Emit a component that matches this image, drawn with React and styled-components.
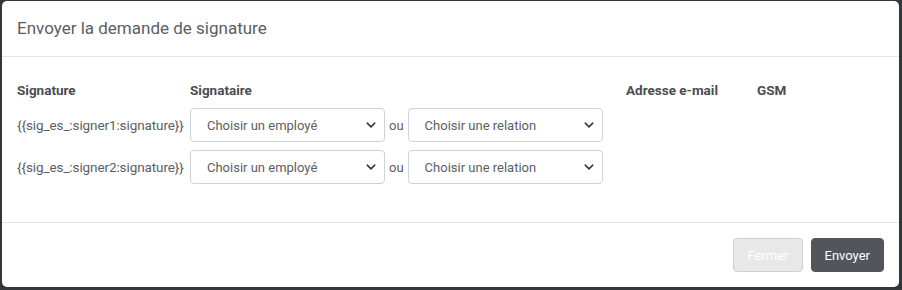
import React from "react";
import styled, { createGlobalStyle } from "styled-components";

const Global = createGlobalStyle`
  html, body { margin: 0; padding: 0; }
  body {
    background: #34363a;
    font-family: Roboto, "Noto Sans", sans-serif;
    width: 902px;
    height: 290px;
    overflow: hidden;
  }
  #root { padding: 1px 3px 0 2px; }
`;

const Modal = styled.div`
  background: #fff;
  border-radius: 5px;
  height: 286px;
  display: flex;
  flex-direction: column;
  box-sizing: border-box;
`;

const Header = styled.div`
  height: 56px;
  flex: none;
  box-sizing: border-box;
  border-bottom: 1px solid #e5e5e5;
  display: flex;
  align-items: center;
  padding: 0 15px;
`;

const Title = styled.h4`
  margin: 0;
  font-size: 17px;
  font-weight: 400;
  color: #5b5e63;
  padding-bottom: 2px;
`;

const Body = styled.div`
  flex: 1;
  padding: 24px 15px 0 15px;
  border-bottom: 1px solid #e5e5e5;
`;

const Grid = styled.div`
  display: grid;
  grid-template-columns: 173px 436px 131px 1fr;
  row-gap: 8px;
  align-items: center;
`;

const HeadCell = styled.div`
  font-size: 13.5px;
  font-weight: 700;
  color: #4a4d52;
  height: 19px;
  line-height: 19px;
`;

const Code = styled.div`
  font-size: 13.5px;
  color: #5b5e63;
  white-space: nowrap;
  letter-spacing: -0.1px;
`;

const Signer = styled.div`
  display: flex;
  align-items: center;
  gap: 4px;
`;

const SelectBox = styled.div`
  width: 195px;
  height: 34px;
  box-sizing: border-box;
  border: 1px solid #cfd2d6;
  border-radius: 4px;
  display: flex;
  align-items: center;
  justify-content: space-between;
  padding: 0 8px 0 16px;
  font-size: 13px;
  color: #5b5e63;
`;

const Or = styled.span`
  font-size: 13px;
  color: #5b5e63;
`;

const Footer = styled.div`
  height: 64px;
  flex: none;
  box-sizing: border-box;
  display: flex;
  align-items: center;
  justify-content: flex-end;
  gap: 8px;
  padding: 0 15px 0 0;
`;

const Button = styled.button`
  height: 34px;
  padding: 0 13px;
  border-radius: 4px;
  font-family: inherit;
  font-size: 13px;
  cursor: pointer;
  border: 1px solid ${(p) => (p.$primary ? "#52555c" : "#cfcfcf")};
  background: ${(p) => (p.$primary ? "#52555c" : "#e8e8e8")};
  color: #ffffff;
`;

const Chevron = () => (
  <svg width="10" height="10" viewBox="0 0 16 16">
    <path d="M2 5l6 6 6-6" fill="none" stroke="#33363b" strokeWidth="2.4" strokeLinecap="round" strokeLinejoin="round" />
  </svg>
);

const Select = ({ label }) => (
  <SelectBox>
    <span>{label}</span>
    <Chevron />
  </SelectBox>
);

const rows = ["{{sig_es_:signer1:signature}}", "{{sig_es_:signer2:signature}}"];

export default function App() {
  return (
    <>
      <Global />
      <Modal>
        <Header>
          <Title>Envoyer la demande de signature</Title>
        </Header>
        <Body>
          <Grid>
            <HeadCell>Signature</HeadCell>
            <HeadCell>Signataire</HeadCell>
            <HeadCell>Adresse e-mail</HeadCell>
            <HeadCell>GSM</HeadCell>
            {rows.map((r) => (
              <React.Fragment key={r}>
                <Code>{r}</Code>
                <Signer>
                  <Select label="Choisir un employé" />
                  <Or>ou</Or>
                  <Select label="Choisir une relation" />
                </Signer>
                <div />
                <div />
              </React.Fragment>
            ))}
          </Grid>
        </Body>
        <Footer>
          <Button disabled>Fermer</Button>
          <Button $primary>Envoyer</Button>
        </Footer>
      </Modal>
    </>
  );
}
